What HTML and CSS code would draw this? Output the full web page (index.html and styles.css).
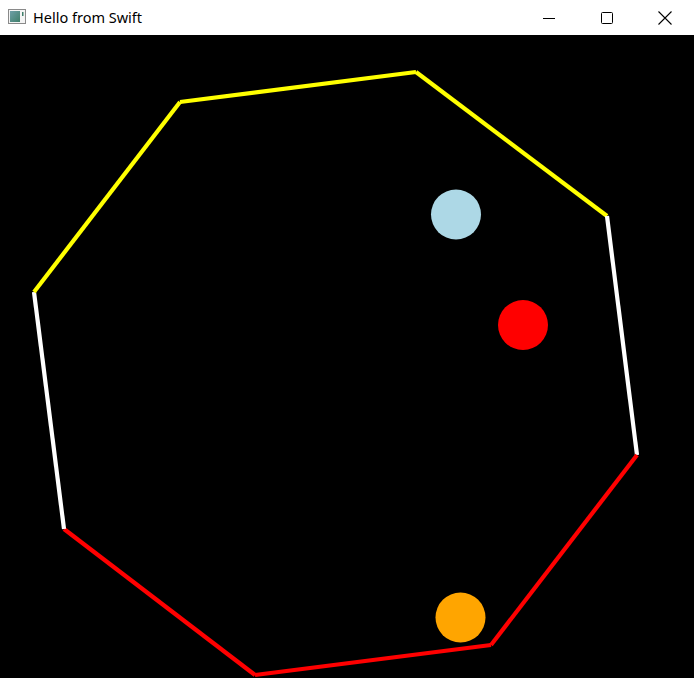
FILE: index.html
```html
<!DOCTYPE html>
<html>
<head>
<meta charset="utf-8">
<link rel="stylesheet" href="styles.css">
</head>
<body>
<div class="window">
  <div class="titlebar">
    <div class="title-left">
      <svg class="app-icon" width="18" height="16" viewBox="0 0 18 16">
        <defs>
          <linearGradient id="g" x1="0" y1="0" x2="1" y2="1">
            <stop offset="0" stop-color="#6e9fa8"/>
            <stop offset="1" stop-color="#3f7f6a"/>
          </linearGradient>
        </defs>
        <rect x="0.5" y="0.5" width="17" height="14" fill="#f4f4f4" stroke="#8a8a8a"/>
        <rect x="2" y="2" width="10" height="11" fill="url(#g)"/>
        <rect x="14" y="3" width="1.5" height="4" fill="#3f7f6a"/>
      </svg>
      <span class="title">Hello from Swift</span>
    </div>
    <div class="controls">
      <div class="ctrl">
        <svg width="12" height="12" viewBox="0 0 12 12"><line x1="0" y1="6.5" x2="12" y2="6.5" stroke="#000" stroke-width="1"/></svg>
      </div>
      <div class="ctrl">
        <svg width="12" height="12" viewBox="0 0 12 12"><rect x="0.5" y="0.5" width="11" height="11" rx="1" fill="none" stroke="#000" stroke-width="1"/></svg>
      </div>
      <div class="ctrl">
        <svg width="14" height="14" viewBox="0 0 14 14"><path d="M0.5 0.5 L13.5 13.5 M13.5 0.5 L0.5 13.5" stroke="#000" stroke-width="1.1" fill="none"/></svg>
      </div>
    </div>
  </div>
  <svg class="canvas" width="694" height="643" viewBox="0 35 694 643">
    <g stroke-width="4.2" stroke-linecap="butt" fill="none">
      <line x1="180" y1="102" x2="416" y2="72" stroke="#ffff00"/>
      <line x1="416" y1="72" x2="607" y2="216" stroke="#ffff00"/>
      <line x1="607" y1="216" x2="637" y2="455" stroke="#ffffff"/>
      <line x1="637" y1="455" x2="491" y2="645" stroke="#ff0000"/>
      <line x1="491" y1="645" x2="255" y2="675" stroke="#ff0000"/>
      <line x1="255" y1="675" x2="64" y2="529" stroke="#ff0000"/>
      <line x1="64" y1="529" x2="34" y2="292" stroke="#ffffff"/>
      <line x1="34" y1="292" x2="180" y2="102" stroke="#ffff00"/>
    </g>
    <circle cx="456" cy="214.5" r="25" fill="#add8e6"/>
    <circle cx="523" cy="325" r="25" fill="#ff0000"/>
    <circle cx="460.5" cy="617.5" r="25" fill="#ffa500"/>
  </svg>
</div>
</body>
</html>
```

FILE: styles.css
```css
html, body {
  margin: 0;
  padding: 0;
  background: #000;
}
.window {
  width: 694px;
  height: 678px;
  display: flex;
  flex-direction: column;
  overflow: hidden;
}
.titlebar {
  height: 35px;
  flex: 0 0 35px;
  background: #fff;
  display: flex;
  align-items: center;
  justify-content: space-between;
}
.title-left {
  display: flex;
  align-items: center;
  padding-left: 8px;
  gap: 7px;
}
.app-icon {
  display: block;
  margin-top: -1px;
}
.title {
  font-family: "Segoe UI", "Noto Sans", "Open Sans", sans-serif;
  font-size: 14.5px;
  color: #000;
  margin-top: -1px;
}
.controls {
  display: flex;
  height: 100%;
}
.ctrl {
  width: 58px;
  height: 100%;
  display: flex;
  align-items: center;
  justify-content: center;
}
.ctrl svg {
  display: block;
}
.canvas {
  display: block;
  background: #000;
}
```
